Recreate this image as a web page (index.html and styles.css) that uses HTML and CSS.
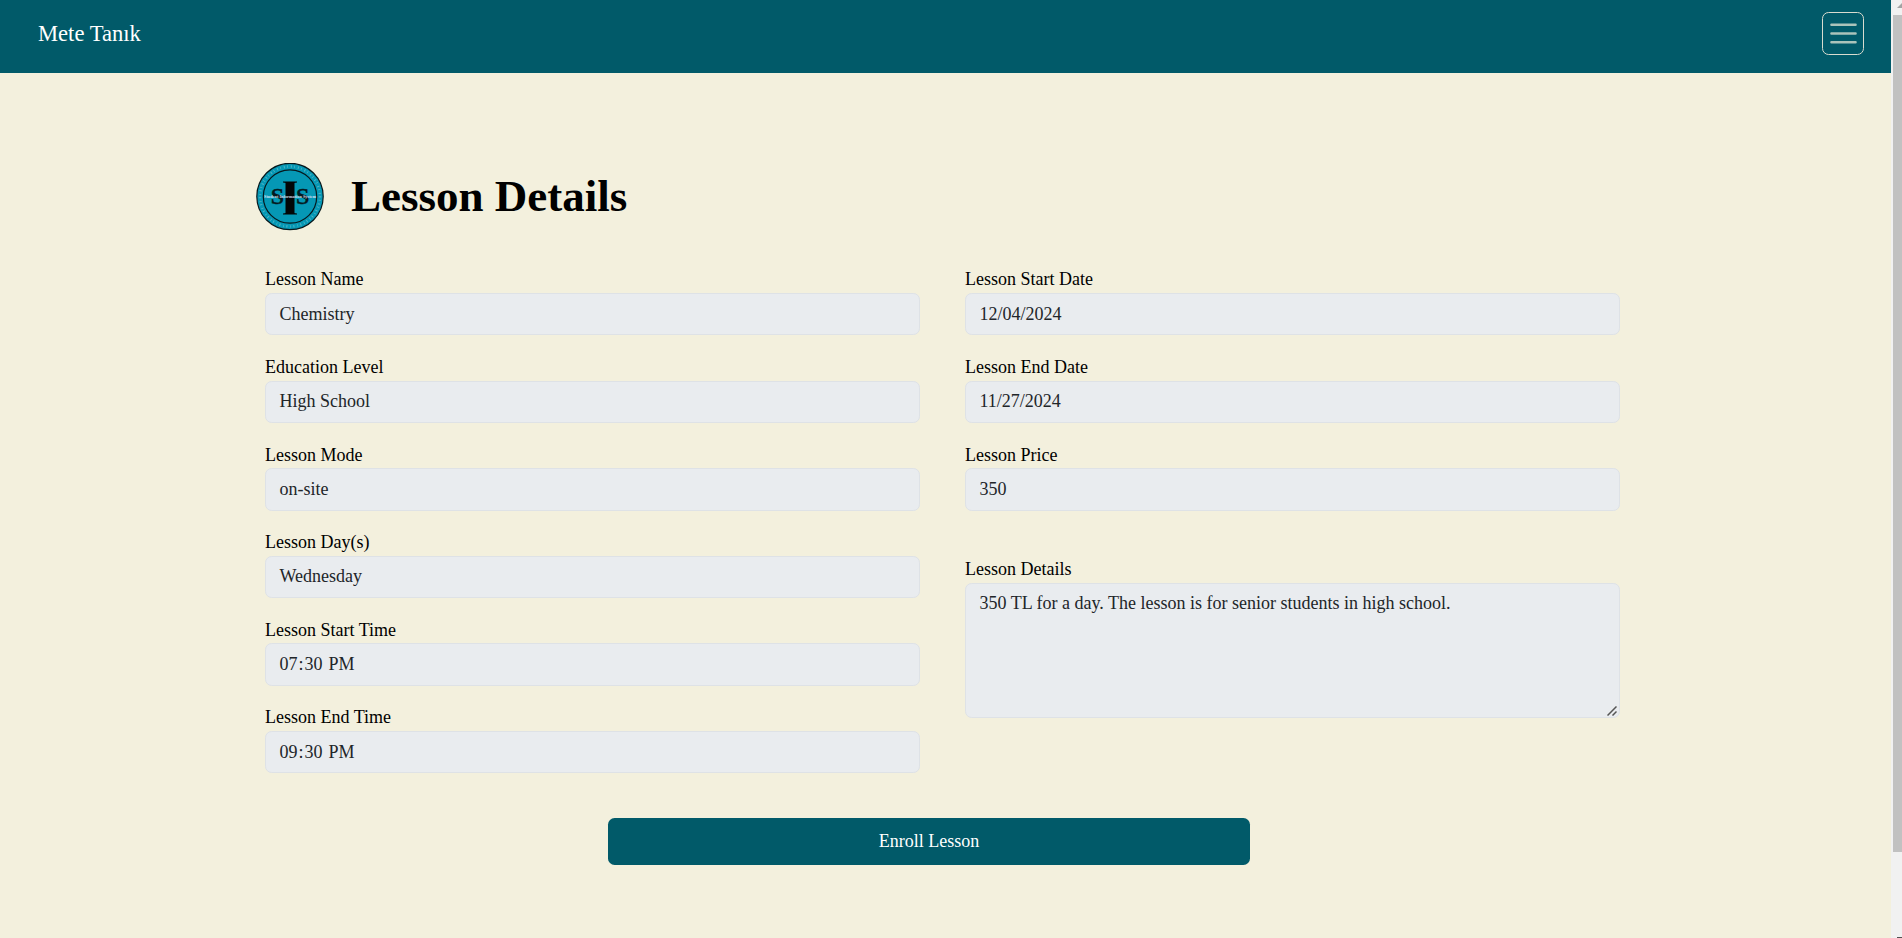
FILE: index.html
```html
<!DOCTYPE html>
<html lang="en">
<head>
<meta charset="utf-8">
<title>Lesson Details</title>
<link rel="stylesheet" href="styles.css">
</head>
<body>
<div class="page">
  <header class="navbar">
    <a class="brand">Mete Tanık</a>
    <button class="toggler" aria-label="Menu">
      <svg width="33" height="33" viewBox="0 0 30 30"><path stroke="#f3f0dd" stroke-opacity=".7" stroke-linecap="round" stroke-width="2.200" d="M4 7h22M4 15h22M4 23h22"/></svg>
    </button>
  </header>
  <main class="content">
    <div class="title">
      <svg class="logo" viewBox="0 0 68 68">
        <circle cx="34" cy="33.500" r="33.2" fill="#0598b5" stroke="#06181d" stroke-width="1.2"/>
        <circle cx="34" cy="33.500" r="30" fill="none" stroke="#8fc6cf" stroke-width="2.6" stroke-dasharray="1 2.4 .7 3" opacity=".55"/>
        <circle cx="34" cy="33.500" r="26.7" fill="none" stroke="#06181d" stroke-width="1.2"/>
        <text class="logo-s" x="21.5" y="41.3">S</text>
        <text class="logo-s" x="46.8" y="41.3">S</text>
        <path d="M27 18.500h14v1l-3 .6v29.800l3 .6v1h-14v-1l3-.6v-29.800l-3-.6z" fill="#020607"/>
        <path d="M29.500 19.500h9v31h-9z" fill="#020607"/>
        <text class="logo-caption" x="34" y="35" textLength="52">Student Information System</text>
      </svg>
      <h1>Lesson Details</h1>
    </div>
    <form class="columns">
      <div class="column">
        <div class="field"><label>Lesson Name</label><div class="control">Chemistry</div></div>
        <div class="field"><label>Education Level</label><div class="control">High School</div></div>
        <div class="field"><label>Lesson Mode</label><div class="control">on-site</div></div>
        <div class="field"><label>Lesson Day(s)</label><div class="control">Wednesday</div></div>
        <div class="field"><label>Lesson Start Time</label><div class="control time"><span>07</span><span>:</span><span>30</span><span class="meridiem">PM</span></div></div>
        <div class="field"><label>Lesson End Time</label><div class="control time"><span>09</span><span>:</span><span>30</span><span class="meridiem">PM</span></div></div>
      </div>
      <div class="column">
        <div class="field"><label>Lesson Start Date</label><div class="control">12/04/2024</div></div>
        <div class="field"><label>Lesson End Date</label><div class="control">11/27/2024</div></div>
        <div class="field"><label>Lesson Price</label><div class="control">350</div></div>
        <div class="field details"><label>Lesson Details</label>
          <div class="control area">350 TL for a day. The lesson is for senior students in high school.
            <svg class="grip" width="10" height="10" viewBox="0 0 10 10"><path d="M.5 9.500l9-9M5.500 9.500l4-4" stroke="#555" stroke-width="1.500"/></svg>
          </div>
        </div>
      </div>
    </form>
    <button class="enroll">Enroll Lesson</button>
  </main>
</div>
<div class="scrollbar">
  <svg class="arrow" width="9" height="15" viewBox="0 0 9 15"><path d="M4 8l5-5v5z" fill="#a3a3a3"/></svg>
  <div class="thumb"></div>
  <div class="arrow-down"></div>
</div>
</body>
</html>
```
FILE: styles.css
```css
* { box-sizing: border-box; }
body {
  margin: 0;
  height: 938px;
  display: flex;
  overflow: hidden;
  background: #f3f0dd;
  font: 18px/26.4px "Liberation Serif", "Times New Roman", serif;
  color: #000;
}
.page { width: 1891px; }
.navbar {
  height: 73px;
  padding: 12px 27px 0 38px;
  display: flex;
  justify-content: space-between;
  align-items: flex-start;
  background: #015a69;
}
.brand { color: #fff; font-size: 22.6px; line-height: 33px; margin-top: 5px; }
.toggler {
  width: 42px;
  height: 43px;
  padding: 0;
  display: grid;
  place-items: center;
  background: none;
  border: 1px solid #d9dccf;
  border-radius: 6.600px;
}
.content { padding: 89.500px 271px 0 256px; display: flex; flex-direction: column; }
.title { display: flex; align-items: center; gap: 27px; height: 68px; }
.logo { width: 68px; height: 68px; }
.logo-s { font-size: 24px; font-weight: bold; text-anchor: middle; fill: #041a20; stroke: #041a20; stroke-width: .3px; }
.logo-caption { font-size: 4.200px; font-weight: bold; text-anchor: middle; fill: #eef; opacity: .85; }
h1 { margin: 0 0 2px; font-size: 45px; line-height: 54px; }
.columns { display: grid; grid-template-columns: 655px 655px; gap: 45px; margin: 35.600px 0 0 9px; }
.field { margin-bottom: 18.2px; }
label { display: block; height: 27px; padding-top: .3px; }
.control {
  height: 42.4px;
  padding: 6.600px 13.500px;
  color: #212529;
  background: #e9ecef;
  border: 1px solid #dee2e6;
  border-radius: 6.600px;
}
.time { display: flex; gap: 1px; }
.meridiem { margin-left: 5px; }
.details { margin-top: 45.5px; }
.area { position: relative; height: 135px; padding-top: 6px; }
.grip { position: absolute; right: 2px; bottom: 1px; }
.enroll {
  width: 642px;
  height: 47px;
  margin: 26.300px 0 0 352px;
  padding: 0;
  border: 0;
  border-radius: 6.600px;
  background: #015a69;
  color: #fff;
  font: inherit;
}
.scrollbar { width: 11px; padding-left: 2px; background: #f1f1f1; }
.arrow { display: block; }
.thumb { height: 837px; background: #c1c1c1; }
.arrow-down { height: 1px; margin: 85px 0 0 4px; background: #505050; }
```
